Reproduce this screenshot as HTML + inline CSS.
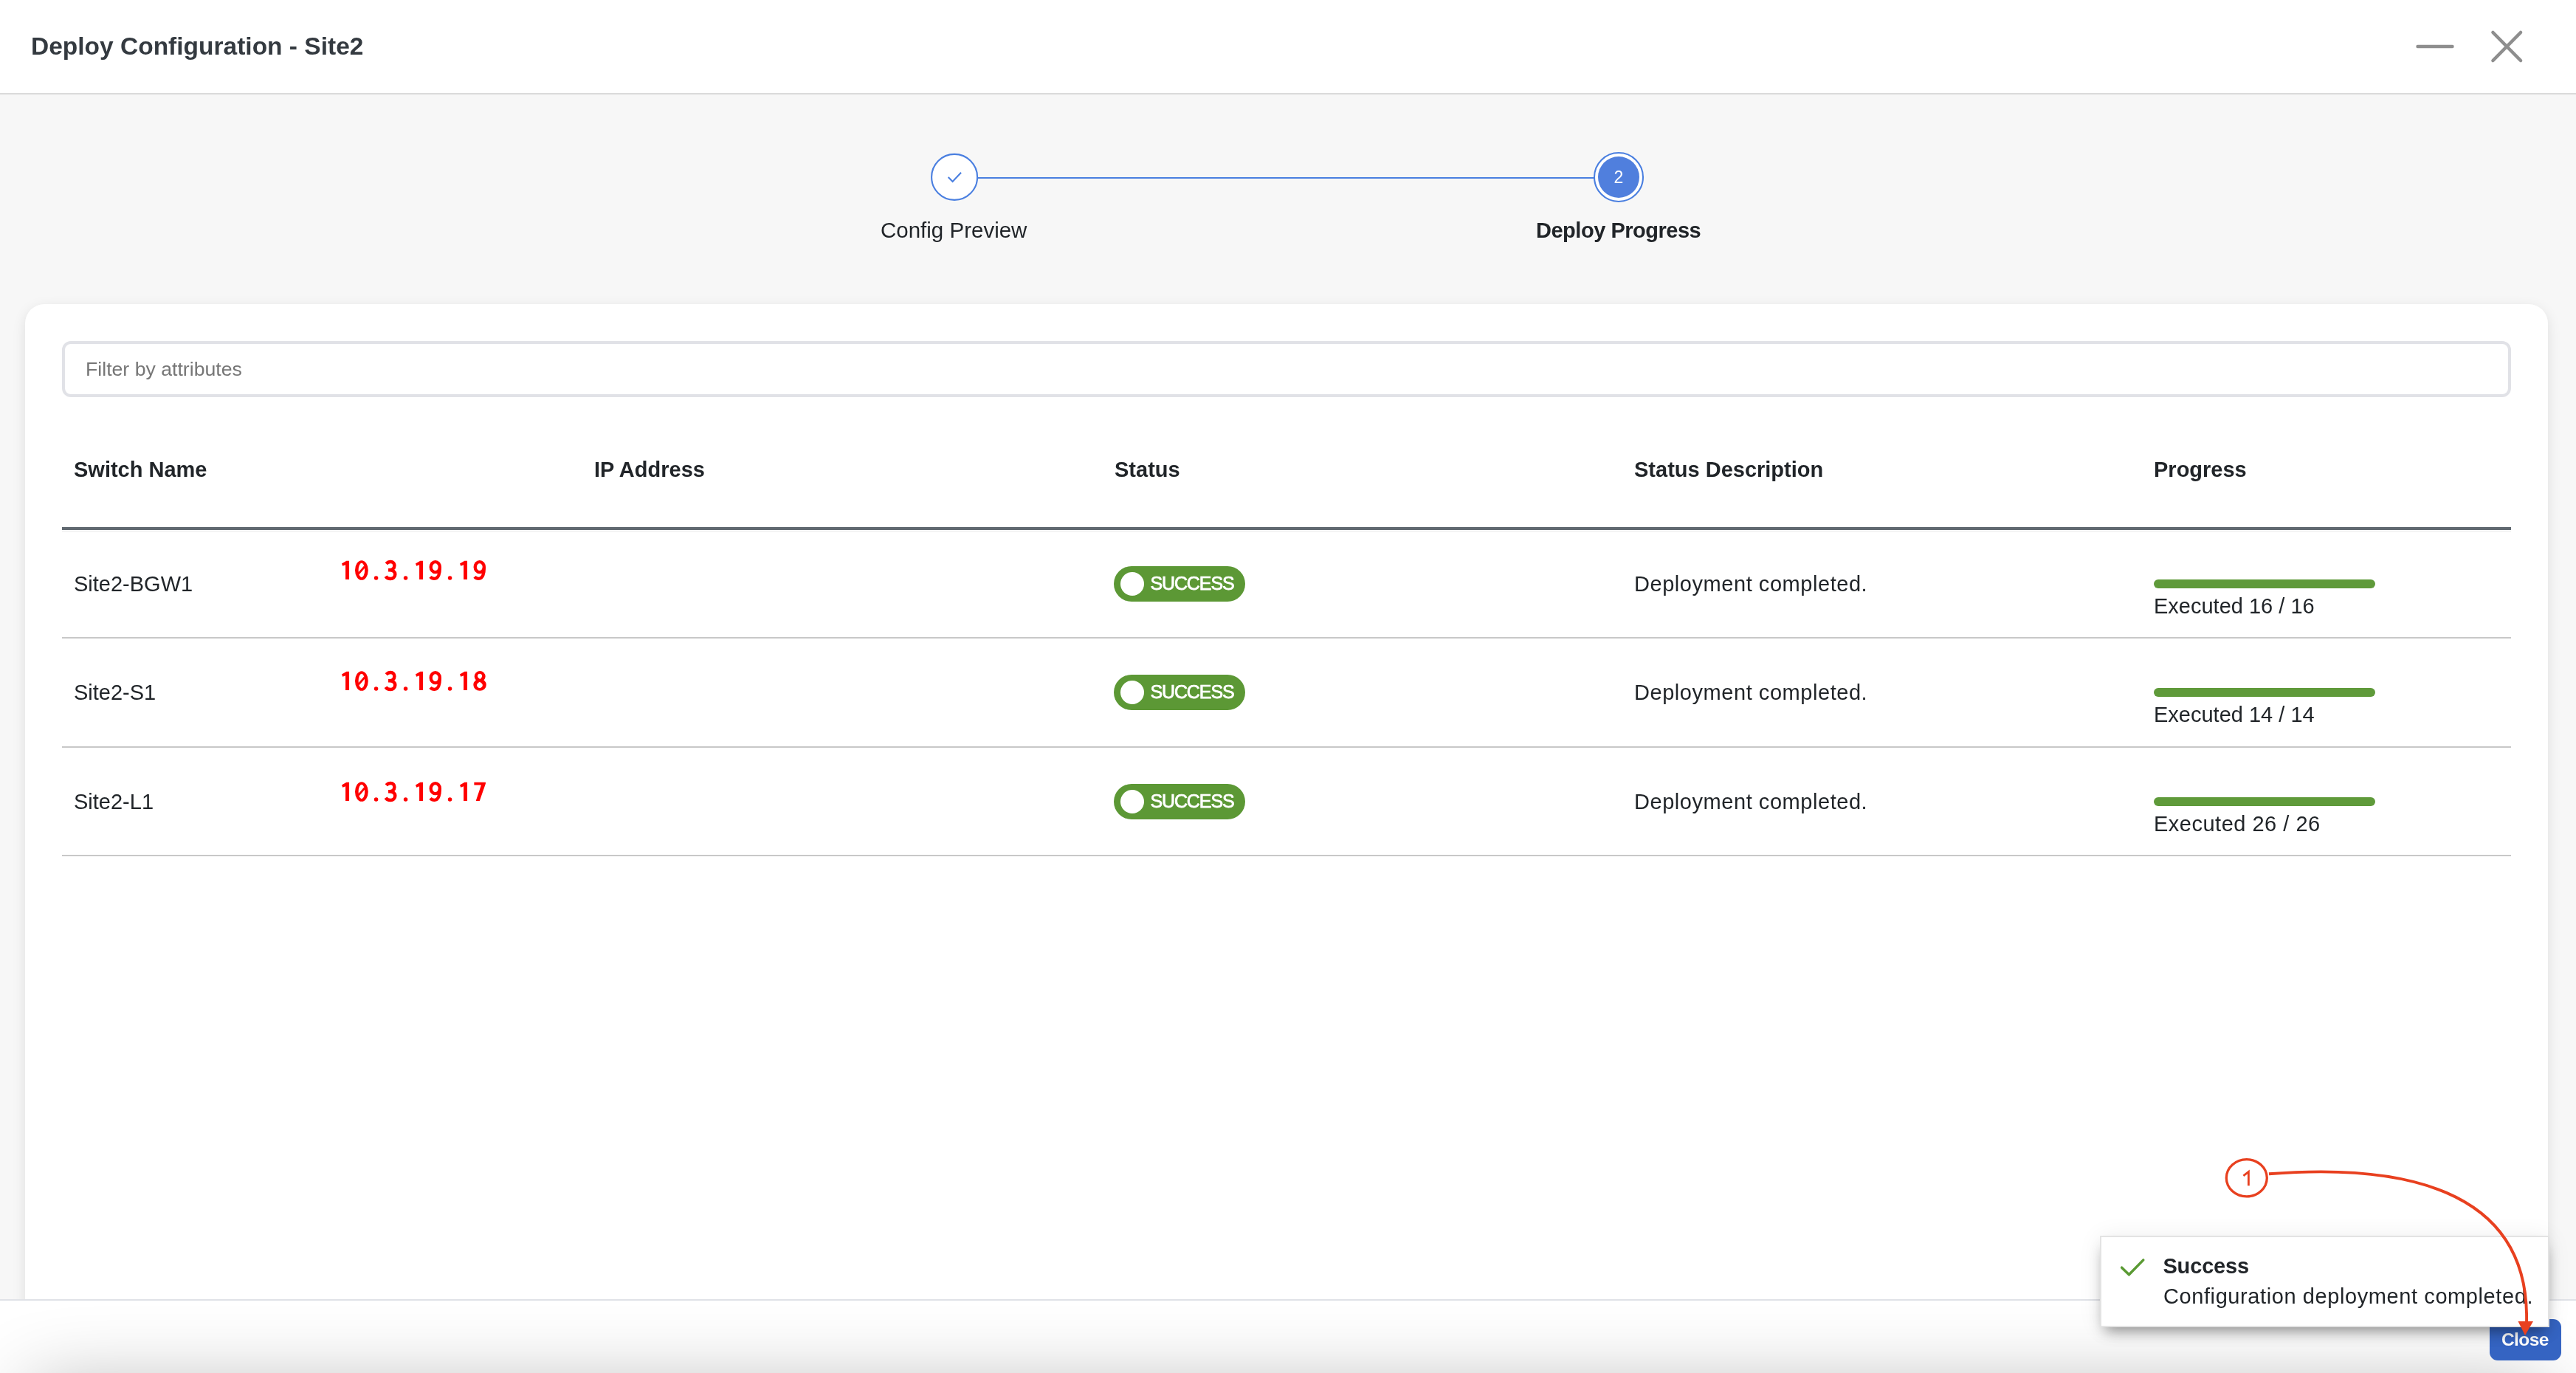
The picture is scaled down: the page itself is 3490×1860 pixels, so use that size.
<!DOCTYPE html>
<html lang="en">
<head>
<meta charset="utf-8">
<title>Deploy Configuration - Site2</title>
<style>
*{box-sizing:border-box;margin:0;padding:0}
html,body{width:3490px;height:1860px;overflow:hidden;background:#f7f7f7}
body{font-family:"Liberation Sans",sans-serif;color:#212529;position:relative;will-change:transform}
.t{position:absolute;white-space:nowrap;line-height:1}
.b{font-weight:700}
#hdr{position:absolute;left:0;top:0;width:3490px;height:126px;background:#fff;border-bottom:0}
#hdrline{position:absolute;left:0;top:126px;width:3490px;height:2px;background:#dadada}
#title{left:42px;top:46px;font-size:33.5px;color:#343a40}
svg{position:absolute;overflow:visible}
#card{position:absolute;left:34px;top:412px;width:3418px;height:1500px;background:#fff;border-radius:26px;box-shadow:0 5px 18px rgba(0,0,0,.10)}
#filter{position:absolute;left:84px;top:462px;width:3318px;height:76px;border:4px solid #e1e2e7;border-radius:12px;background:#fff}
#ph{left:116px;top:487px;font-size:26.67px;color:#767676}
.th{font-size:29px;font-weight:700;top:622px;color:#212529}
#theadline{position:absolute;left:84px;top:714px;width:3318px;height:4px;background:#616971}
.rl{position:absolute;left:84px;width:3318px;height:2px;background:#c8c8c8}
.td{font-size:29px;color:#212529}
.badge{position:absolute;left:1509px;width:178px;height:48px;border-radius:24px;background:#5c9835}
.badge i{position:absolute;left:9px;top:8px;width:32px;height:32px;border-radius:50%;background:#fff}
.badge span{position:absolute;left:49.4px;top:11px;font-size:25px;letter-spacing:-1.1px;line-height:1;color:#fff;font-weight:400;-webkit-text-stroke:.75px #fff;white-space:nowrap}
.bar{position:absolute;left:2918px;width:300px;height:12px;border-radius:6px;background:#5f9a3a}
#footer{position:absolute;left:0;top:1760px;width:3490px;height:100px;background:#fff;overflow:hidden}
#fsh{position:absolute;left:42px;right:42px;top:120px;height:100px;box-shadow:0 0 106px rgba(0,0,0,.3)}
#footline{position:absolute;left:0;top:1760px;width:3490px;height:2px;background:#e0e2e7}
#toast{position:absolute;left:2845px;top:1674px;width:609px;height:124px;background:#fff;border:2px solid #e3e3e3;box-shadow:0 12px 18px -7px rgba(0,0,0,.42),0 2px 30px rgba(0,0,0,.075)}
#close{position:absolute;left:3373px;top:1787px;width:97px;height:56px;border-radius:11px;background:#3564c2}
</style>
</head>
<body>
<div id="hdr"></div>
<div id="hdrline"></div>
<div class="t b" id="title">Deploy Configuration - Site2</div>
<svg id="winctl" style="left:3260px;top:30px" width="180" height="70" viewBox="3260 30 180 70">
  <path d="M3275.5 63H3322.5" stroke="#8e8e8e" stroke-width="4.4" stroke-linecap="round" fill="none"/>
  <path d="M3377.5 44L3415 82M3415 44L3377.5 82" stroke="#8e8e8e" stroke-width="4.6" stroke-linecap="round" fill="none"/>
</svg>

<!-- stepper -->
<svg id="stepper" style="left:1200px;top:190px" width="1100" height="100" viewBox="1200 190 1100 100">
  <path d="M1324 240.9H2160" stroke="#4a7fe0" stroke-width="2" fill="none"/>
  <circle cx="1293.1" cy="239.9" r="31" fill="#fff" stroke="#4a7fe0" stroke-width="2.1"/>
  <path d="M1284.7 240L1290.6 246L1302.1 233.8" stroke="#4a7fe0" stroke-width="2.1" fill="none"/>
  <circle cx="2193" cy="240" r="33" fill="#fff" stroke="#4a7fe0" stroke-width="2.1"/>
  <circle cx="2193" cy="240" r="28" fill="#507fdd"/>
</svg>
<div class="t" id="stepnum" style="left:2186.5px;top:229px;font-size:23px;color:#fff">2</div>
<div class="t" id="step1" style="left:1193px;top:297px;font-size:29.5px">Config Preview</div>
<div class="t b" id="step2" style="left:2081px;top:298px;font-size:29px;letter-spacing:-0.48px">Deploy Progress</div>

<!-- card -->
<div id="card"></div>
<div id="filter"></div>
<div class="t" id="ph">Filter by attributes</div>

<div class="t th" id="th1" style="left:100px">Switch Name</div>
<div class="t th" id="th2" style="left:805px">IP Address</div>
<div class="t th" id="th3" style="left:1510px">Status</div>
<div class="t th" id="th4" style="left:2214px">Status Description</div>
<div class="t th" id="th5" style="left:2918px">Progress</div>
<div id="theadline"></div>
<div style="position:absolute;left:84px;top:719px;width:3318px;height:1.5px;background:#f4f4f4"></div>

<!-- row 1 -->
<div class="t td" id="r1n" style="left:100px;top:777px">Site2-BGW1</div>
<div class="badge" style="top:767px"><i></i><span>SUCCESS</span></div>
<div class="t td" id="r1d" style="letter-spacing:.55px;left:2214px;top:777px">Deployment completed.</div>
<div class="bar" style="top:785px"></div>
<div class="t td" id="r1e" style="left:2918px;top:807px">Executed 16 / 16</div>
<div class="rl" style="top:863px"></div>

<!-- row 2 -->
<div class="t td" id="r2n" style="left:100px;top:924px">Site2-S1</div>
<div class="badge" style="top:914px"><i></i><span>SUCCESS</span></div>
<div class="t td" id="r2d" style="letter-spacing:.55px;left:2214px;top:924px">Deployment completed.</div>
<div class="bar" style="top:932px"></div>
<div class="t td" id="r2e" style="left:2918px;top:954px">Executed 14 / 14</div>
<div class="rl" style="top:1011px"></div>

<!-- row 3 -->
<div class="t td" id="r3n" style="left:100px;top:1072px">Site2-L1</div>
<div class="badge" style="top:1062px"><i></i><span>SUCCESS</span></div>
<div class="t td" id="r3d" style="letter-spacing:.55px;left:2214px;top:1072px">Deployment completed.</div>
<div class="bar" style="top:1080px"></div>
<div class="t td" id="r3e" style="letter-spacing:.5px;left:2918px;top:1102px">Executed 26 / 26</div>
<div class="rl" style="top:1158px"></div>


<div class="t" style="left:461px;top:757px;font-size:33px;letter-spacing:1.6px;color:transparent">10.3.19.19</div>
<div class="t" style="left:461px;top:907px;font-size:33px;letter-spacing:1.6px;color:transparent">10.3.19.18</div>
<div class="t" style="left:461px;top:1057px;font-size:33px;letter-spacing:1.6px;color:transparent">10.3.19.17</div>
<div class="t" style="left:3036px;top:1582px;font-size:29px;color:transparent">1</div>
<!-- IP overlay digits (hand-drawn mono glyphs) -->
<svg id="ips" style="left:450px;top:740px" width="230" height="360" viewBox="450 740 230 360">
<defs>
<path id="g1" d="M8.9 -25.2L12.54 -25.2L12.54 0L7.59 0L7.59 -19.8L3.8 -18.2L2.49 -21.55Z" fill="#ff0000"/>
<g id="g0"><path fill="#ff0000" fill-rule="evenodd" d="M0.5 -12.5a8.9 13.3 0 1 0 17.8 0a8.9 13.3 0 1 0 -17.8 0ZM5.12 -12.5a4.28 9.7 0 1 0 8.56 0a4.28 9.7 0 1 0 -8.56 0Z"/><path d="M5.3 -7.9L13.5 -17.4" stroke="#ff0000" stroke-width="2.9" fill="none"/></g>
<circle id="gd" cx="9.05" cy="-1.9" r="2.75" fill="#ff0000"/>
<path id="g3" d="M2.8 -21.2Q5.3 -23.9 8.7 -23.9C12 -23.9 13.9 -21.7 13.9 -18.7C13.9 -15.1 11 -12.8 7.3 -12.8L5.55 -12.8M7.3 -12.8C11.8 -12.8 14.8 -10.5 14.8 -6.9C14.8 -3.3 12.1 -1 8.5 -1C5.5 -1 3.3 -2.3 2.06 -4.25" stroke="#ff0000" stroke-width="4.5" fill="none"/>
<g id="g9"><ellipse cx="9.3" cy="-16.8" rx="6.1" ry="7" stroke="#ff0000" stroke-width="4.3" fill="none"/><path d="M15.4 -16.4C15.4 -8.9 14 -1.1 8 -1.1C5.7 -1.1 3.8 -2.1 2.5 -3.6" stroke="#ff0000" stroke-width="4.3" fill="none"/></g>
<mask id="m8" maskUnits="userSpaceOnUse" x="-2" y="-30" width="24" height="34"><rect x="-2" y="-30" width="24" height="34" fill="#fff"/><path fill="#000" d="M6.5 -19C6.5 -21.2 7.8 -22.16 9.55 -22.16C11.3 -22.16 12.6 -21.2 12.6 -19C12.6 -17.2 11 -16 9.9 -15C8.4 -16 6.5 -17.2 6.5 -19ZM5.5 -7C5.5 -9.2 8 -10.4 9.3 -11.36C10.8 -10.4 13.4 -9.2 13.4 -7C13.4 -4.6 11.6 -3.06 9.45 -3.06C7.3 -3.06 5.5 -4.6 5.5 -7Z"/></mask>
<g id="g8" mask="url(#m8)"><ellipse cx="9.7" cy="-18.6" rx="7.4" ry="7.3" fill="#ff0000"/><ellipse cx="9.58" cy="-7.2" rx="8.74" ry="8.07" fill="#ff0000"/></g>
<path id="g7" d="M1.86 -25.2L17.45 -25.2L17.45 -23.4L9.29 0L4.19 0L11.47 -21.4L1.86 -21.4Z" fill="#ff0000"/>
</defs>
<use href="#g1" x="460.5" y="785"/><use href="#g0" x="480.5" y="785"/><use href="#gd" x="500.5" y="785"/><use href="#g3" x="520.5" y="785"/><use href="#gd" x="540.5" y="785"/><use href="#g1" x="560.5" y="785"/><use href="#g9" x="580.5" y="785"/><use href="#gd" x="600.5" y="785"/><use href="#g1" x="620.5" y="785"/><use href="#g9" x="640.5" y="785"/>
<use href="#g1" x="460.5" y="935"/><use href="#g0" x="480.5" y="935"/><use href="#gd" x="500.5" y="935"/><use href="#g3" x="520.5" y="935"/><use href="#gd" x="540.5" y="935"/><use href="#g1" x="560.5" y="935"/><use href="#g9" x="580.5" y="935"/><use href="#gd" x="600.5" y="935"/><use href="#g1" x="620.5" y="935"/><use href="#g8" x="640.5" y="935"/>
<use href="#g1" x="460.5" y="1085"/><use href="#g0" x="480.5" y="1085"/><use href="#gd" x="500.5" y="1085"/><use href="#g3" x="520.5" y="1085"/><use href="#gd" x="540.5" y="1085"/><use href="#g1" x="560.5" y="1085"/><use href="#g9" x="580.5" y="1085"/><use href="#gd" x="600.5" y="1085"/><use href="#g1" x="620.5" y="1085"/><use href="#g7" x="640.5" y="1085"/>
</svg>

<!-- footer -->
<div id="footer"><div id="fsh"></div></div>
<div id="footline"></div>
<div id="close"></div>
<div class="t b" id="closetxt" style="left:3389px;top:1803px;font-size:24.5px;letter-spacing:-.6px;color:#fff">Close</div>

<!-- toast -->
<div id="toast"></div>
<svg id="tcheck" style="left:2870px;top:1700px" width="40" height="34" viewBox="2870 1700 40 34">
  <path d="M2874.6 1717.2L2884.4 1726.8L2903.8 1706.9" stroke="#5a9a33" stroke-width="3.5" stroke-linecap="round" stroke-linejoin="round" fill="none"/>
</svg>
<div class="t b" id="tt" style="letter-spacing:-.15px;left:2930.4px;top:1701px;font-size:29px">Success</div>
<div class="t" id="tm" style="letter-spacing:.59px;left:2931px;top:1742px;font-size:29px">Configuration deployment completed.</div>

<!-- annotation -->
<svg id="anno" style="left:3000px;top:1560px" width="460" height="260" viewBox="3000 1560 460 260">
  <ellipse cx="3043.8" cy="1595.8" rx="27.5" ry="25.1" fill="none" stroke="#e8401f" stroke-width="3.3"/>
  <path d="M3074 1590.3C3244 1577 3428 1604 3423 1792" fill="none" stroke="#e8401f" stroke-width="3.9"/>
  <path d="M3411.5 1790L3432 1790L3421 1809Z" fill="#e8401f"/>
  <path d="M3039.4 1592.9L3046.4 1587.4L3046.4 1606.3" fill="none" stroke="#e8401f" stroke-width="2.8"/>
</svg>
</body>
</html>
